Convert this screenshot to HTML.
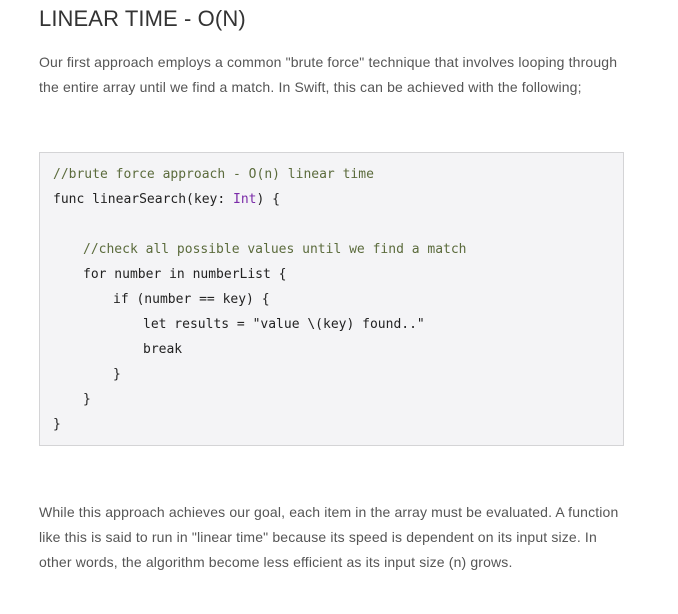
<!DOCTYPE html>
<html><head><style>
body{margin:0;background:#fff;width:678px;height:614px;overflow:hidden;font-family:"Liberation Sans",sans-serif;}
h1{position:absolute;left:39px;top:6px;margin:0;font-weight:normal;font-size:22px;color:#333;letter-spacing:0.1px;}
p{position:absolute;left:39px;margin:0;font-size:14px;line-height:25px;color:#555;letter-spacing:0.15px;}
.code{position:absolute;left:39px;top:152px;width:583px;height:292px;background:#f4f4f6;border:1px solid #d4d4d6;}
.l{position:absolute;font-family:"DejaVu Sans Mono","Liberation Mono",monospace;font-size:13px;color:#222;white-space:pre;line-height:16px;}
.c{color:#5b6b3c}.t{color:#7a2aa8}
</style></head><body>
<h1>LINEAR TIME - O(N)</h1>
<p style="top:50px;width:592px">Our first approach employs a common "brute force" technique that involves looping through the entire array until we find a match. In Swift, this can be achieved with the following;</p>
<div class="code"></div>
<div class="l c" style="left:53px;top:167px">//brute force approach - O(n) linear time</div>
<div class="l" style="left:53px;top:192px">func linearSearch(key: <span class="t">Int</span>) {</div>
<div class="l c" style="left:83px;top:242px">//check all possible values until we find a match</div>
<div class="l" style="left:83px;top:267px">for number in numberList {</div>
<div class="l" style="left:113px;top:292px">if (number == key) {</div>
<div class="l" style="left:143px;top:317px">let results = "value \(key) found.."</div>
<div class="l" style="left:143px;top:342px">break</div>
<div class="l" style="left:113px;top:367px">}</div>
<div class="l" style="left:83px;top:392px">}</div>
<div class="l" style="left:53px;top:417px">}</div>
<p style="top:500px;width:586px">While this approach achieves our goal, each item in the array must be evaluated. A function like this is said to run in "linear time" because its speed is dependent on its input size. In other words, the algorithm become less efficient as its input size (n) grows.</p>
</body></html>
